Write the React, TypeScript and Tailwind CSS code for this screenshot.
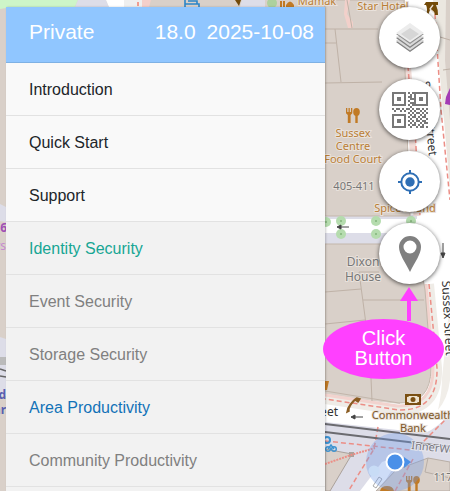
import type { ReactNode } from "react";

interface MenuItem {
  label: string;
  tone: "main" | "active" | "muted" | "link";
}

const menuItems: MenuItem[] = [
  { label: "Introduction", tone: "main" },
  { label: "Quick Start", tone: "main" },
  { label: "Support", tone: "main" },
  { label: "Identity Security", tone: "active" },
  { label: "Event Security", tone: "muted" },
  { label: "Storage Security", tone: "muted" },
  { label: "Area Productivity", tone: "link" },
  { label: "Community Productivity", tone: "muted" },
];

const toneStyles: Record<MenuItem["tone"], string> = {
  main: "bg-[#f9f9f9] text-[#212529]",
  active: "bg-[#f2f2f2] text-[#17a694]",
  muted: "bg-[#f2f2f2] text-[#808080]",
  link: "bg-[#f2f2f2] text-[#1272b8]",
};

// "1" marks a dark module, the three finder squares are drawn separately
const qrRows = [
  "000000001010000000",
  "000000000100000000",
  "000000001100000000",
  "000000000110000000",
  "000000001000000000",
  "000000000110000000",
  "000000001010000000",
  "000000000100000000",
  "101101011010110101",
  "010010100101001010",
  "000000001010110101",
  "000000000101001010",
  "000000001011010110",
  "000000000100101001",
  "000000001010110110",
  "000000000101001011",
  "000000001011010100",
  "000000000100101101",
];

const trees = [
  [326, 222],
  [341, 221],
  [376, 221],
  [411, 221],
  [341, 234],
  [376, 234],
];

const MapFork = ({ x, y }: { x: number; y: number }) => (
  <g transform={`translate(${x} ${y})`} fill="#c17a25">
    <path d="M0 0h1.300v4h1.200V0h1.300v4H5V0h1.300v5.200L4.600 7v8H1.800V7L0 5.200z" />
    <ellipse cx="10.500" cy="4" rx="3.300" ry="4" />
    <path d="M9.300 7h2.400v8H9.300z" />
  </g>
);

const StreetMap = () => (
  <svg
    viewBox="0 0 450 491"
    preserveAspectRatio="xMinYMin slice"
    className="absolute inset-0 h-full w-full font-['Noto_Sans',sans-serif]"
    aria-hidden="true"
  >
    <rect width="450" height="491" fill="#d9d0c9" />

    {/* top and left edges */}
    <path d="M0 0h78l-3 7H12L0 9z" fill="#cdf5c8" />
    <path d="M78 0h28l3 7H75z" fill="#dddde8" />
    <path d="M106 0h18v7h-15z" fill="#fff" />
    <path d="M124 0h18v7h-18z" fill="#efefef" />
    <path d="M142 0h9l-2 7h-7z" fill="#f4cfca" />
    <path d="M138 2v4" stroke="#f08070" strokeWidth="1.500" />
    <path d="M185 0v7M185 4h14v3M188 1h9v3" fill="none" stroke="#2a85c8" strokeWidth="1.600" />
    <path d="M235 0h6l-2 6z" fill="#734a08" />
    <path d="M242 0h23v7h-25z" fill="#dddde8" />
    <circle cx="272" cy="3" r="5" fill="#add19e" />
    <path d="M280 1h2v6h-2zM283 1h2v6h-2zM286 5q4-7 8 0v2h-8z" fill="#c17a25" />
    <path d="M0 204l6 3v15l-6-1z" fill="#dddde8" />
    <path d="M0 337l6 2v57H0z" fill="#dddde8" />
    <path d="M0 357h6v8H0z" fill="#bbb" />
    <path d="M0 369l6 2M0 376l6 1" stroke="#666" strokeWidth="1.500" />

    {/* main street and the square below it */}
    <path d="M405 0h45v491H325v-95l75 8 8-294z" fill="#fff" />
    <path d="M325 422l100 11q14-6 25-20v78H325z" fill="#dddde8" />
    <path d="M325 215h92v29h-92z" fill="#dddde8" />
    <path d="M325 219h92v14h-92z" fill="#fff" />
    <path d="M433 0h17v190l-6-70z" fill="#ebe7e0" />
    <path d="M446 0h4v120l-5-60z" fill="#d9d0c9" />
    <path d="M440 37l10 3M443 70l7-1" stroke="#bdb0a5" />
    <path d="M450 88l-4 9-1 7 5 1z" fill="#a33bb5" />
    <path d="M450 300v80q-2 18-12 30 4-18 4-32z" fill="#f1eee9" />

    {/* pavements */}
    <path d="M407 60l3 40 7 116" fill="none" stroke="#f2ddd8" strokeWidth="7" />
    <path d="M429 284l8 84q1 43-38 42l-74-11" fill="none" stroke="#efece7" strokeWidth="10" />
    <path d="M426 284l7 84q1 39-36 38l-72-11" fill="none" stroke="#f2d3ce" strokeWidth="3" />

    {/* buildings */}
    <path d="M325 0h79l1 70 5 146h-85z" fill="#d9d0c9" stroke="#c3b6ab" />
    <path d="M325 244h92l8 46 6 78q0 36-32 35l-74-12z" fill="#d9d0c9" stroke="#c3b6ab" />
    <path d="M345 0h5l-3 14 6 8v6h-5l-4-14z" fill="#f2d0ca" />
    <g fill="none" stroke="#bfb2a7">
      <path d="M325 29h53M335 29l6 53M325 43h11M325 83l57-1M347 0l5 28" />
      <path d="M325 292l36-3M359 272l7 52M325 324l40-4M363 300h61M371 378l1 23M359 272h20" />
    </g>

    <g fill="none" stroke="#ec8e86" strokeWidth="1.500" strokeDasharray="5 3">
      <path d="M435 14l6 96 9 90" />
      <path d="M408 66l3 40M415 130l5 86" />
      <path d="M429 284l8 84q1 43-38 42l-74-11" />
    </g>

    {trees.map(([cx, cy]) => (
      <g key={`${cx}-${cy}`}>
        <circle cx={cx} cy={cy} r="5" fill="#b5dcae" />
        <circle cx={cx} cy={cy} r="1" fill="#83b47b" />
      </g>
    ))}

    {/* tracks and lower blocks */}
    <path d="M325 449l27 5-22 37h-5z" fill="#d9d0c9" stroke="#aaa19b" />
    <path d="M382 462l-22 29h19l22-36z" fill="#fff" />
    <path d="M376 491l20-21 32-12 22 4v29z" fill="#d9d0c9" stroke="#b8aea6" />
    <path d="M428 458l-3 14 25 6" fill="none" stroke="#b8aea6" />
    <path d="M349 452h5v5h-5z" fill="#aaa19b" />
    <g fill="none" stroke="#ec8e86" strokeWidth="1.500" strokeDasharray="5 3">
      <path d="M325 441l85 9M450 415l-30 30M378 427l-4 22-25 41M395 491l18-32" />
      <path d="M325 464l26-9 24-7" strokeDasharray="2 1" strokeWidth="2" />
    </g>
    <path d="M325 424l125 15M325 432l125 15" stroke="#6b6b70" strokeWidth="2" />
    <path d="M379 477l3 2-6 9-3-2z" fill="#fff" stroke="#aaa" />

    {/* points of interest */}
    <MapFork x={346} y={108} />
    <MapFork x={406} y={476} />
    <path d="M426 2h12v3h-2q2 4 2 10h-3q-1-5-5-5l-2 5h-2q2-6 0-10h-2z" fill="#734a08" />
    <path d="M433 5l-3 4 4 4" fill="none" stroke="#e9dfd6" strokeWidth="1.300" />
    <path d="M405 394h16v11h-16z" fill="#7a4f12" />
    <path d="M407 397q2 0 2-1h8q0 1 2 1v5q-2 0-2 1h-8q0-1-2-1z" fill="#eee3cf" />
    <circle cx="413" cy="399.500" r="2.500" fill="#7a4f12" />
    <path d="M349 411q-1-4 6-11l3 2 2-3-3-1q-5 3-9 10l-1 4z" fill="#8a5c22" stroke="#8a5c22" strokeWidth="1.500" />
    <path d="M325 381h4l-2 9h-2z" fill="#c17a25" />
    <path d="M380 491q1-5 7-5t7 5z" fill="#c17a25" />
    <circle cx="327" cy="440" r="3" fill="none" stroke="#3c92d0" strokeWidth="2" />
    <g fill="none" stroke="#3c92d0" strokeWidth="1.400">
      <circle cx="328" cy="449" r="2.300" />
      <circle cx="334" cy="449" r="2.300" />
      <path d="M328 449l3-4 3 4" />
    </g>

    {/* one-way arrows */}
    <g fill="#444" stroke="#444">
      <path d="M349 227h-9M363 417h-9M443 243v10" />
      <path d="M341 225l-4 2 4 2zM355 415l-4 2 4 2zM441 253l2 5 2-5z" />
    </g>

    {/* current position */}
    <circle cx="395" cy="462" r="29" fill="#6f9be8" fillOpacity="0.350" />
    <circle cx="374" cy="471" r="5.500" fill="#c8dcf6" />
    <path d="M404 457l7 5-7 6z" fill="#4a90e8" />
    <circle cx="395" cy="462" r="8.500" fill="#4a90e8" stroke="#fff" strokeWidth="2" />

    {/* labels */}
    <g fontSize="11" textAnchor="middle" stroke="#e9e2dc" strokeWidth="2" paintOrder="stroke">
      <g fill="#b97e35">
        <text x="317" y="5">Mamak</text>
        <text x="383" y="10">Star Hotel</text>
        <text x="353" y="137">Sussex</text>
        <text x="353" y="150">Centre</text>
        <text x="353" y="163">Food Court</text>
        <text x="405" y="212">Spice Island</text>
      </g>
      <g fill="#777">
        <text x="354" y="190">405-411</text>
        <text x="443" y="481">117</text>
      </g>
      <g fill="#777" fontSize="12">
        <text x="363" y="266">Dixon</text>
        <text x="363" y="281">House</text>
      </g>
      <g fill="#80592a">
        <text x="413" y="419">Commonwealth</text>
        <text x="413" y="432">Bank</text>
      </g>
    </g>
    <g fontSize="12" fill="#333" stroke="#fff" strokeWidth="2" paintOrder="stroke">
      <text x="338" y="416" textAnchor="end">Street</text>
      <text transform="translate(429 156) rotate(84)" textAnchor="end">Sussex Street</text>
      <text transform="translate(442 281) rotate(87)">Sussex Street</text>
    </g>
    <text
      transform="translate(411 449) rotate(6)"
      fontSize="11"
      fill="#77777f"
      stroke="#e6e6ee"
      strokeWidth="2"
      paintOrder="stroke"
    >
      InnerWest
    </text>
    <g fontSize="12" fontWeight="700" textAnchor="end">
      <text x="7" y="232" fill="#a04fb5">6</text>
      <text x="6" y="250" fill="#c58bd0" fontWeight="400">ys</text>
      <text x="6" y="399" fill="#5a5fb0">nd</text>
      <text x="6" y="414" fill="#5a5fb0">ar</text>
    </g>
  </svg>
);

const LayersIcon = () => (
  <svg width="30" height="30" viewBox="0 0 30 30" aria-hidden="true">
    <path d="M1 19l14 10 14-10-4-2H5z" fill="#808080" />
    <path d="M1 17.500l14 10 14-10-4-2H5z" fill="#d9d9d9" />
    <path d="M1 15l14 10 14-10-4-2H5z" fill="#808080" />
    <path d="M1 13.500l14 10 14-10z" fill="#d9d9d9" />
    <path d="M1 11l14 10 14-10z" fill="#919191" />
    <path d="M15 0l14 10-14 9.500L1 10z" fill="#ececec" />
    <path d="M15 5l9 6-9 6.500L6 11z" fill="#d6d6d6" />
  </svg>
);

const QrIcon = () => (
  <svg width="36" height="36" viewBox="0 0 36 36" fill="#787878" aria-hidden="true">
    {["translate(0 0)", "translate(22 0)", "translate(0 22)"].map((pos) => (
      <g key={pos} transform={pos}>
        <rect x="1" y="1" width="12" height="12" fill="none" stroke="#787878" strokeWidth="2" />
        <rect x="5" y="5" width="4" height="4" />
      </g>
    ))}
    {qrRows.map((row, y) =>
      row
        .split("")
        .map((cell, x) =>
          cell === "1" ? <rect key={`${x}-${y}`} x={x * 2} y={y * 2} width="2" height="2" /> : null
        )
    )}
  </svg>
);

const LocateIcon = () => (
  <svg width="26" height="26" viewBox="0 0 26 26" stroke="#2f6fb5" strokeWidth="2" aria-hidden="true">
    <circle cx="13" cy="13" r="8.700" fill="none" />
    <circle cx="13" cy="13" r="4.700" fill="#2f6fb5" stroke="none" />
    <path d="M13 1v4M13 21v4M1 13h4M21 13h4" />
  </svg>
);

const PinIcon = () => (
  <svg width="22" height="36" viewBox="0 0 22 36" fill="#808080" aria-hidden="true">
    <path
      fillRule="evenodd"
      d="M11 0a11 11 0 0 1 11 11c0 7-6 15-11 25C6 26 0 18 0 11A11 11 0 0 1 11 0zm0 4.500a6.500 6.500 0 1 0 0 13 6.500 6.500 0 0 0 0-13z"
    />
  </svg>
);

const MapButton = ({ label, children }: { label: string; children: ReactNode }) => (
  <button
    type="button"
    aria-label={label}
    className="flex h-[61px] w-[61px] cursor-pointer items-center justify-center rounded-full bg-white shadow-[0_1px_4px_rgba(0,0,0,0.65)]"
  >
    {children}
  </button>
);

const App = () => {
  return (
    <div className="relative flex min-h-screen items-stretch justify-between overflow-hidden pt-[7px] pr-[10px] pl-[6px] font-['Liberation_Sans',Arial,sans-serif]">
      <StreetMap />

      <aside className="relative flex w-full max-w-[319px] flex-col bg-[#f2f2f2] shadow-[1px_0_2px_rgba(0,0,0,0.2)]">
        <header className="flex h-14 items-center justify-between border-b border-[#7eb1e4] bg-[#90c6ff] pr-[11px] pb-1.5 pl-[23px] text-[21px] text-white">
          <h1>Private</h1>
          <p className="flex gap-[11px]">
            <span>18.0</span>
            <span>2025-10-08</span>
          </p>
        </header>
        <nav>
          {menuItems.map((item) => (
            <a
              key={item.label}
              href="#"
              className={`flex h-[53px] items-center border-b border-[#e2e2e2] px-[23px] pt-0.5 text-base ${toneStyles[item.tone]}`}
            >
              {item.label}
            </a>
          ))}
        </nav>
      </aside>

      <div className="relative flex shrink-0 flex-col gap-[11px]">
        <MapButton label="Layers">
          <LayersIcon />
        </MapButton>
        <MapButton label="QR code">
          <QrIcon />
        </MapButton>
        <MapButton label="Locate me">
          <LocateIcon />
        </MapButton>
        <div className="relative">
          <MapButton label="Drop pin">
            <PinIcon />
          </MapButton>
          <div className="absolute top-full -right-1 flex flex-col pt-[3px]">
            <svg width="18" height="34" viewBox="0 0 18 34" className="mr-[26px] self-end" fill="#ff40ff" aria-hidden="true">
              <path d="M9 0l9 14h-7v20H7V14H0z" />
            </svg>
            <p className="-mt-[2px] flex h-[60px] w-[121px] items-center justify-center rounded-[50%] bg-[#ff40ff] pb-0.5 text-center text-xl leading-5 text-white">
              Click
              <br />
              Button
            </p>
          </div>
        </div>
      </div>
    </div>
  );
};

export default App;
